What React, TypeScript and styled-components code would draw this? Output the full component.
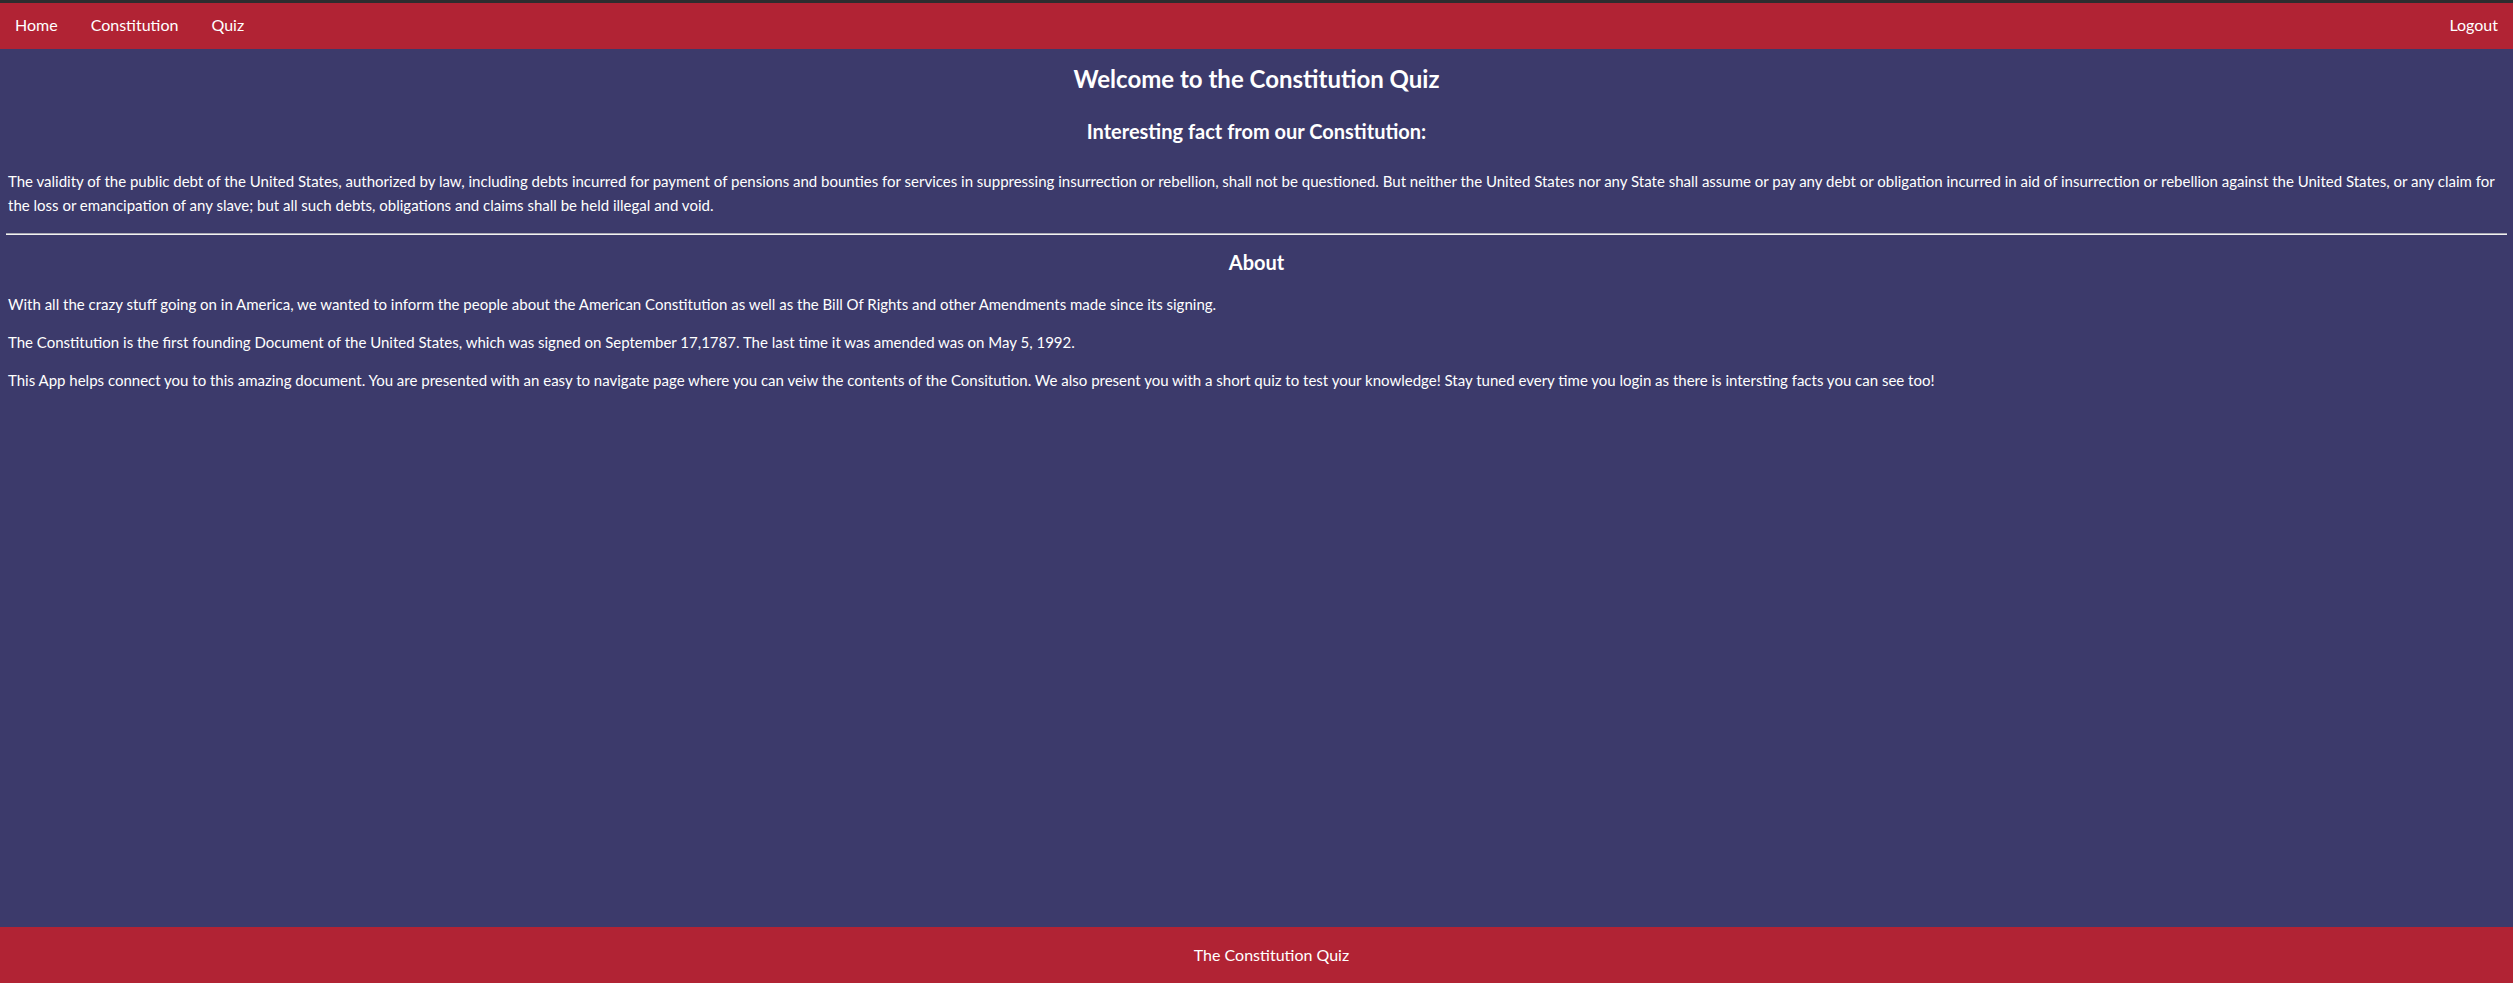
import React from "react";
import styled, { createGlobalStyle } from "styled-components";

const GlobalStyle = createGlobalStyle`
  html, body {
    margin: 0;
    padding: 0;
    background: #3c3a6b;
  }
  body {
    font-family: Lato, "Open Sans", sans-serif;
    color: #ffffff;
  }
  * { box-sizing: border-box; }
`;

const Page = styled.div`
  min-height: 100vh;
  display: flex;
  flex-direction: column;
  background: #3c3a6b;
`;

const NavBar = styled.nav`
  height: 49px;
  border-top: 3px solid #2d2d2f;
  background: #b12334;
  display: flex;
  align-items: center;
  justify-content: space-between;
  padding: 0 15px 2px 15px;
`;

const NavGroup = styled.div`
  display: flex;
  align-items: center;
  gap: 33px;
`;

const NavLink = styled.a`
  color: #ffffff;
  font-size: 16px;
  line-height: 20px;
  text-decoration: none;
  cursor: pointer;
`;

const Main = styled.main`
  flex: 1;
  padding: 0 6px 0 6px;
`;

const Title = styled.h1`
  margin: 15px 0 0 0;
  font-size: 24px;
  line-height: 30px;
  font-weight: 700;
  text-align: center;
`;

const SubTitle = styled.h2<{ $top: number }>`
  margin: ${(p) => p.$top}px 0 0 0;
  font-size: 20px;
  line-height: 26px;
  font-weight: 700;
  text-align: center;
`;

const Paragraph = styled.p<{ $top: number }>`
  margin: ${(p) => p.$top}px 0 0 0;
  padding: 0 2px;
  font-size: 15px;
  line-height: 24px;
`;

const Rule = styled.hr`
  margin: 16px 0 0 0;
  height: 0;
  border: none;
  border-top: 1px solid #a9a9b4;
  border-bottom: 1px solid #f2f2f2;
`;

const Footer = styled.footer`
  height: 56px;
  background: #b12334;
  display: flex;
  align-items: center;
  justify-content: center;
  padding: 0 0 2px 30px;
  font-size: 16px;
`;

export default function App() {
  return (
    <>
      <GlobalStyle />
      <Page>
        <NavBar>
          <NavGroup>
            <NavLink>Home</NavLink>
            <NavLink>Constitution</NavLink>
            <NavLink>Quiz</NavLink>
          </NavGroup>
          <NavLink>Logout</NavLink>
        </NavBar>
        <Main>
          <Title>Welcome to the Constitution Quiz</Title>
          <SubTitle $top={24}>Interesting fact from our Constitution:</SubTitle>
          <Paragraph $top={25}>
            The validity of the public debt of the United States, authorized by law, including debts incurred for payment of pensions and bounties for services in suppressing insurrection or rebellion, shall not be questioned. But neither the United States nor any State shall assume or pay any debt or obligation incurred in aid of insurrection or rebellion against the United States, or any claim for the loss or emancipation of any slave; but all such debts, obligations and claims shall be held illegal and void.
          </Paragraph>
          <Rule />
          <SubTitle $top={14}>About</SubTitle>
          <Paragraph $top={17}>
            With all the crazy stuff going on in America, we wanted to inform the people about the American Constitution as well as the Bill Of Rights and other Amendments made since its signing.
          </Paragraph>
          <Paragraph $top={14}>
            The Constitution is the first founding Document of the United States, which was signed on September 17,1787. The last time it was amended was on May 5, 1992.
          </Paragraph>
          <Paragraph $top={14}>
            This App helps connect you to this amazing document. You are presented with an easy to navigate page where you can veiw the contents of the Consitution. We also present you with a short quiz to test your knowledge! Stay tuned every time you login as there is intersting facts you can see too!
          </Paragraph>
        </Main>
        <Footer>The Constitution Quiz</Footer>
      </Page>
    </>
  );
}
